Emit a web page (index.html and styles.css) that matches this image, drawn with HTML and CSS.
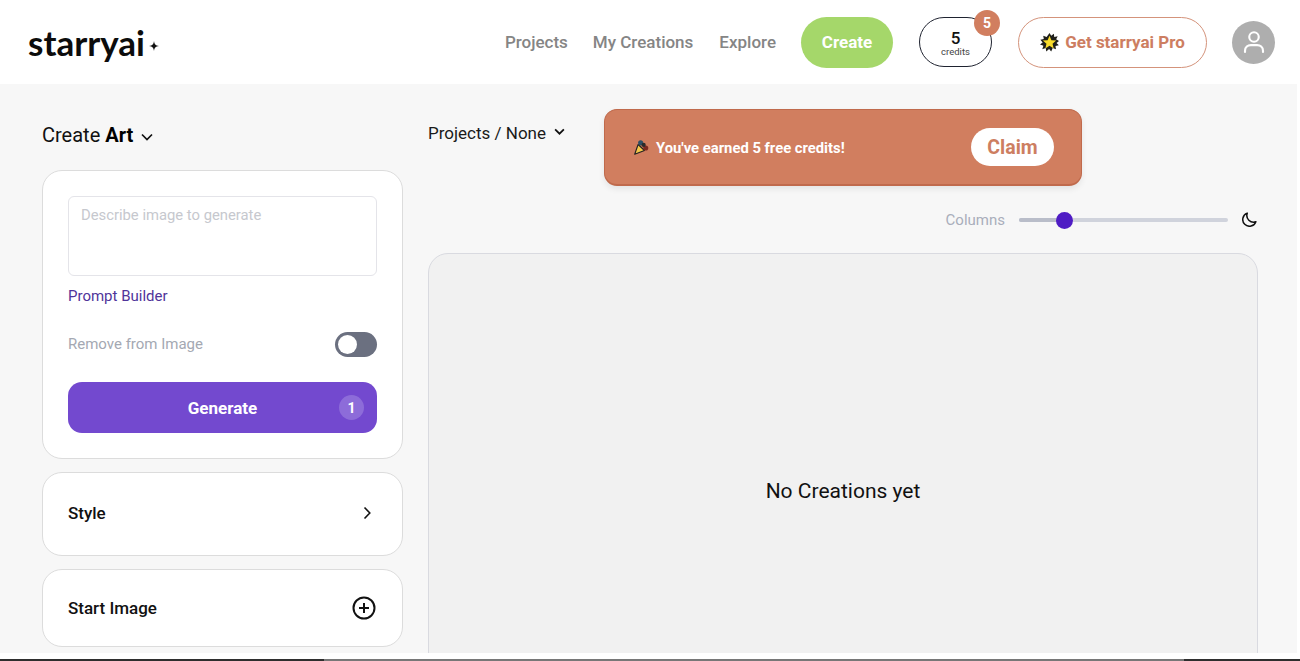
FILE: index.html
```html
<!DOCTYPE html>
<html lang="en">
<head>
<meta charset="utf-8">
<title>starryai</title>
<link rel="stylesheet" href="styles.css">
</head>
<body>
<div class="frame">
  <header class="header">
    <div class="logo"><span class="logo-text">starryai</span>
      <svg class="logo-star" viewBox="0 0 10 10"><path d="M5 0C5.400 3.200 6.400 4.500 10 5C6.400 5.500 5.400 6.800 5 10C4.600 6.800 3.600 5.500 0 5C3.600 4.500 4.600 3.200 5 0Z"/></svg>
    </div>
    <nav class="nav">
      <a class="nav-link nav-projects">Projects</a>
      <a class="nav-link nav-creations">My Creations</a>
      <a class="nav-link nav-explore">Explore</a>
      <a class="create-btn">Create</a>
      <div class="credits">
        <span class="credits-num">5</span>
        <span class="credits-label">credits</span>
        <span class="credits-badge">5</span>
      </div>
      <a class="pro-btn">
        <svg class="pro-star" viewBox="0 0 20 20">
          <path d="M10 0L11.800 2.800L14.600 0.800L15 4.200L18.600 3.400L17 6.600L20 8.400L17.400 10.400L19.800 13L16.300 13.600L16.800 17.200L13.400 15.800L11.800 19.600L9.600 16.800L6.600 19.400L6 15.800L2.400 17L3.600 13.400L0 12.200L2.800 10L0.400 7L4 6.400L3.400 2.800L7 4.200Z" fill="#20201a"/>
          <path d="M10 2.800L12 7.600L17 8L13.200 11.200L14.400 16.200L10 13.500L5.600 16.200L6.800 11.200L3 8L8 7.600Z" fill="#f8dc2a"/>
        </svg>
        <span>Get starryai Pro</span>
      </a>
      <div class="avatar">
        <svg viewBox="0 0 24 24" fill="none" stroke="#fff" stroke-width="1.700" stroke-linecap="round"><circle cx="12" cy="8" r="3.800"/><path d="M4.800 20V19C4.800 16 7 14.500 9.500 14.500H14.500C17 14.500 19.200 16 19.200 19V20"/></svg>
      </div>
    </nav>
  </header>

  <main class="main">
    <aside class="sidebar">
      <div class="create-title">Create <b>Art</b>
        <svg class="chev" viewBox="0 0 12 8"><path d="M1 1.500L6 6.500L11 1.500"/></svg>
      </div>
      <section class="card card-prompt">
        <div class="textarea">Describe image to generate</div>
        <a class="builder">Prompt Builder</a>
        <div class="remove-row">
          <span>Remove from Image</span>
          <span class="toggle"><span class="toggle-knob"></span></span>
        </div>
        <button class="generate"><span>Generate</span><span class="gen-count">1</span></button>
      </section>
      <section class="card card-style">
        <span>Style</span>
        <svg class="chev-right" viewBox="0 0 8 14"><path d="M1.500 1.500L6.800 7L1.500 12.500"/></svg>
      </section>
      <section class="card card-start">
        <span>Start Image</span>
        <svg class="plus" viewBox="0 0 24 24"><circle cx="12" cy="12" r="10.500"/><path d="M12 7V17M7 12H17"/></svg>
      </section>
    </aside>

    <section class="content">
      <div class="top-row">
        <div class="projects-select">Projects / None
          <svg class="chev chev-sm" viewBox="0 0 12 8"><path d="M1 1.500L6 6.500L11 1.500"/></svg>
        </div>
        <div class="banner">
          <div class="banner-msg">
            <svg class="popper" viewBox="0 0 20 20">
              <path d="M2 18L6 6.500L13.500 13.500Z" fill="#f4c84a" stroke="#222" stroke-width="1.300" stroke-linejoin="round"/>
              <circle cx="9" cy="4.500" r="3" fill="#2c4f66"/>
              <circle cx="15" cy="10.500" r="3" fill="#7a2a20"/>
              <circle cx="12.500" cy="7" r="2.500" fill="#2a2a2a"/>
            </svg>
            <span>You've earned 5 free credits!</span>
          </div>
          <button class="claim">Claim</button>
        </div>
      </div>
      <div class="columns-row">
        <span class="columns-label">Columns</span>
        <div class="slider"><span class="slider-fill"></span><span class="slider-thumb"></span></div>
        <svg class="moon" viewBox="2 2 20 20"><path d="M20.500 15A9 9 0 0 1 9 3.500A9 9 0 1 0 20.500 15Z"/></svg>
      </div>
      <div class="panel">No Creations yet</div>
    </section>
  </main>
  <div class="bottom-strip"></div>
</div>
<div class="bottom-line"><span class="bottom-line-dark"></span><span class="bottom-line-mid"></span></div>
</body>
</html>
```

FILE: styles.css
```css
* { box-sizing: border-box; }
html, body { margin: 0; height: 100%; overflow: hidden; background: #fff; }
body { font-family: Roboto, "Liberation Sans", sans-serif; color: #111; display: flex; flex-direction: column; }
.frame { width: 1297px; height: 659px; flex: none; display: flex; flex-direction: column; overflow: hidden; }

.header { height: 84px; flex: none; background: #fff; display: flex; align-items: center; justify-content: space-between; padding: 0 22px 0 28px; }
.logo { display: flex; align-items: center; }
.logo-text { font-family: Lato, sans-serif; font-size: 35px; line-height: 40px; font-weight: 700; color: #0c0c0c; letter-spacing: 0; }
.logo-star { width: 10px; height: 10px; margin: 7px 0 0 4px; fill: #111; }
.nav { display: flex; align-items: center; }
.nav-link { font-size: 17px; font-weight: 500; color: #858585; }
.nav-projects { margin-right: 25px; }
.nav-creations { margin-right: 26px; }
.nav-explore { margin-right: 25px; }
.create-btn { width: 92px; height: 51px; border-radius: 26px; background: #a5d76a; color: #fff; font-size: 17px; font-weight: 700; display: flex; align-items: center; justify-content: center; margin-right: 26px; }
.credits { position: relative; width: 73px; height: 50px; border: 1px solid #1f2330; border-radius: 25px; display: flex; flex-direction: column; align-items: center; justify-content: center; margin-right: 26px; padding-top: 2px; }
.credits-num { font-size: 17px; line-height: 16px; font-weight: 500; color: #111; }
.credits-label { font-size: 9.500px; line-height: 11px; color: #444; }
.credits-badge { position: absolute; top: -8px; right: -9px; width: 26px; height: 26px; border-radius: 50%; background: #d17e5f; color: #fff; font-size: 14px; font-weight: 700; display: flex; align-items: center; justify-content: center; }
.pro-btn { width: 189px; height: 51px; border: 1px solid #d4937b; border-radius: 26px; display: flex; align-items: center; justify-content: center; gap: 6px; color: #cd7e61; font-size: 17px; font-weight: 700; margin-right: 25px; }
.pro-star { width: 19px; height: 19px; }
.avatar { width: 43px; height: 43px; border-radius: 50%; background: #aeaeae; display: flex; align-items: center; justify-content: center; }
.avatar svg { width: 30px; height: 30px; }

.main { flex: 1; min-height: 0; background: #f7f7f7; display: flex; padding-left: 42px; overflow: hidden; }
.sidebar { width: 361px; flex: none; }
.create-title { height: 86px; padding-top: 38px; font-size: 20px; line-height: 26px; color: #111; display: flex; align-items: flex-start; white-space: pre; }
.create-title b { font-weight: 700; color: #000; }
.create-title .chev { margin: 11px 0 0 8px; }
.chev { width: 12px; height: 8px; fill: none; stroke: #111; stroke-width: 1.700; }
.card { background: #fff; border: 1px solid #dcdcdc; border-radius: 20px; margin-bottom: 13px; }
.card-prompt { height: 289px; padding: 25px 25px 0; }
.textarea { height: 80px; border: 1px solid #e4e4e9; border-radius: 6px; padding: 9px 12px; font-size: 14.800px; line-height: 18px; color: #c6c8ce; }
.builder { display: block; margin-top: 11px; font-size: 15px; line-height: 18px; color: #50349a; }
.remove-row { margin-top: 26px; height: 26px; display: flex; align-items: center; justify-content: space-between; font-size: 15px; color: #a4a8b2; }
.toggle { width: 42px; height: 25px; border-radius: 13px; background: #6b7080; display: block; padding: 3px; }
.toggle-knob { display: block; width: 19px; height: 19px; border-radius: 50%; background: #fff; }
.generate { position: relative; margin-top: 25px; width: 100%; height: 51px; border: 0; border-radius: 14px; background: #7349cf; color: #fff; font-family: inherit; font-size: 17px; font-weight: 700; display: flex; align-items: center; justify-content: center; padding: 0; }
.gen-count { position: absolute; right: 13px; top: 13px; width: 25px; height: 25px; border-radius: 50%; background: #8d6cd9; font-size: 14px; display: flex; align-items: center; justify-content: center; }
.card-style, .card-start { display: flex; align-items: center; justify-content: space-between; padding: 0 25px; font-size: 17px; font-weight: 500; color: #111; }
.card-style { height: 84px; padding-bottom: 2px; }
.card-start { height: 78px; }
.chev-right { width: 8px; height: 14px; margin-right: 6px; fill: none; stroke: #111; stroke-width: 1.600; }
.plus { width: 24px; height: 24px; margin-right: 1px; fill: none; stroke: #111; stroke-width: 2; }

.content { width: 830px; margin-left: 25px; flex: none; }
.top-row { height: 102px; padding-top: 25px; display: flex; align-items: flex-start; }
.projects-select { width: 176px; padding-top: 14px; font-size: 17px; line-height: 20px; color: #1a1a1a; display: flex; align-items: flex-start; white-space: pre; }
.chev-sm { width: 11px; height: 7px; margin: 5px 0 0 8px; stroke-width: 2; }
.banner { width: 478px; height: 77px; background: #d17e5f; border: 1px solid #c06a4c; border-bottom-width: 2px; border-radius: 13px; box-shadow: 0 3px 6px rgba(0,0,0,.08); display: flex; align-items: center; justify-content: space-between; padding: 0 27px 0 28px; }
.banner-msg { display: flex; align-items: center; gap: 6px; color: #fff; font-size: 14.800px; font-weight: 700; line-height: 18px; padding-top: 1px; }
.popper { width: 17px; height: 17px; }
.claim { width: 83px; height: 38px; border: 0; border-radius: 19px; background: #fff; color: #cd7e61; font-family: inherit; font-size: 19.500px; font-weight: 700; padding: 0; }
.columns-row { height: 67px; display: flex; align-items: flex-start; justify-content: flex-end; padding: 24px 1px 0 0; }
.columns-label { font-size: 15px; line-height: 18px; color: #a9aebb; margin-right: 14px; margin-top: 1px; }
.slider { position: relative; width: 209px; height: 4px; margin-top: 8px; border-radius: 2px; background: #d0d3dc; margin-right: 14px; }
.slider-fill { position: absolute; left: 0; top: 0; width: 45px; height: 4px; border-radius: 2px; background: #b9bdc9; }
.slider-thumb { position: absolute; left: 37px; top: -6px; width: 17px; height: 17px; border-radius: 50%; background: #4f1cc4; }
.moon { width: 15px; height: 15px; margin-top: 2px; fill: none; stroke: #111; stroke-width: 2; stroke-linejoin: round; }
.panel { height: 520px; background: #f1f1f1; border: 1px solid #d9dae0; border-radius: 20px; display: flex; align-items: flex-start; justify-content: center; padding-top: 224px; font-size: 21px; line-height: 26px; color: #111; }
.bottom-strip { height: 6px; flex: none; background: #fff; }
.bottom-line { height: 2px; flex: none; background: #2e2e2e; display: flex; }
.bottom-line-dark { width: 324px; background: #2e2e2e; }
.bottom-line-mid { width: 860px; background: #777; }
```
